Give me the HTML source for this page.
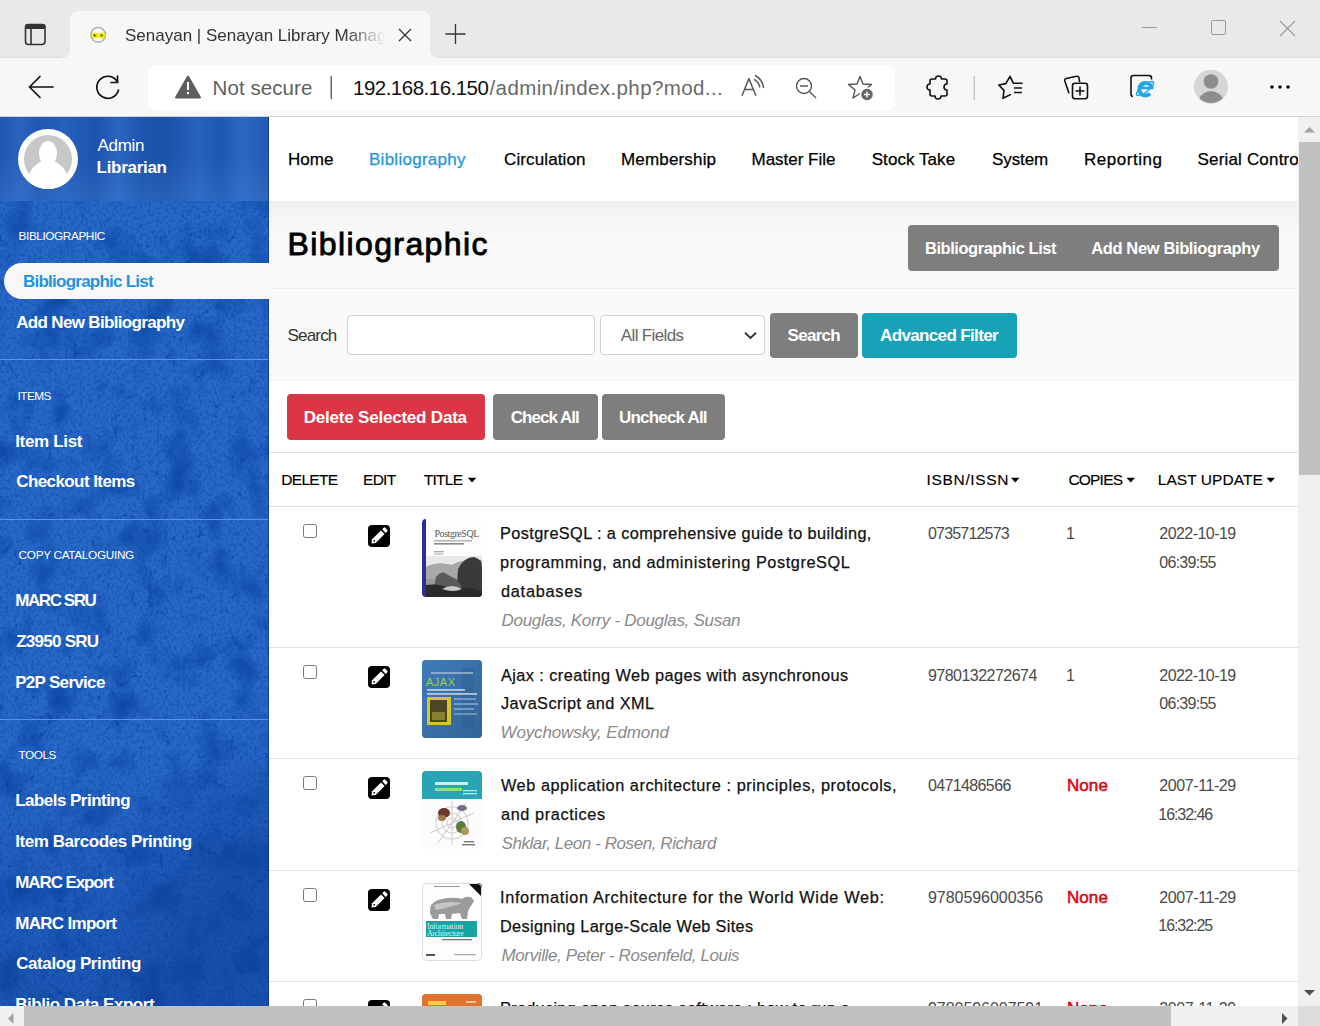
<!DOCTYPE html><html><head><meta charset="utf-8"><style>
*{box-sizing:border-box;margin:0;padding:0}
html,body{width:1320px;height:1026px;overflow:hidden;background:#fff;font-family:"Liberation Sans",sans-serif}
.t{position:absolute;white-space:nowrap;line-height:1}
svg{position:absolute;overflow:visible}
.b{position:absolute}
#tabstrip{position:absolute;left:0;top:0;width:1320px;height:58px;background:#e9e9e9}
#tab{position:absolute;left:70px;top:11px;width:360px;height:47px;background:#f7f7f7;border-radius:8px 8px 0 0}
#toolbar{position:absolute;left:0;top:58px;width:1320px;height:59px;background:#f7f7f7;border-bottom:1px solid #d2d2d2}
#addr{position:absolute;left:148px;top:65px;width:747px;height:45px;background:#fff;border-radius:8px}
#page{position:absolute;left:0;top:117px;width:1298px;height:889px;overflow:hidden;background:#fff}
#sidebar{position:absolute;left:0;top:0;width:269px;height:889px;background:#1b59bb;overflow:hidden}
#vscroll{position:absolute;left:1298px;top:117px;width:22px;height:889px;background:#f0f0f0}
#hscroll{position:absolute;left:0;top:1006px;width:1298px;height:20px;background:#f0f0f0}
#corner{position:absolute;left:1298px;top:1006px;width:22px;height:20px;background:#dcdcdc}
</style></head><body>
<div id="tabstrip"></div>
<div class="b" style="left:0px;top:56px;width:1320px;height:2px;background:linear-gradient(#e6e6e6,#dcdcdc);"></div>
<div id="tab"></div>
<div class="b" style="left:62px;top:50px;width:8px;height:8px;background:#f7f7f7;"></div>
<div class="b" style="left:62px;top:50px;width:8px;height:8px;background:#e9e9e9;border-bottom-right-radius:8px"></div>
<div class="b" style="left:430px;top:50px;width:8px;height:8px;background:#f7f7f7;"></div>
<div class="b" style="left:430px;top:50px;width:8px;height:8px;background:#e9e9e9;border-bottom-left-radius:8px"></div>
<div id="toolbar"></div><div id="addr"></div>
<svg style="left:0;top:0" width="1320" height="117" viewBox="0 0 1320 117"><rect x="25.5" y="24.5" width="19.5" height="20" rx="3" fill="none" stroke="#333" stroke-width="1.6"/><rect x="25" y="24" width="20.5" height="5" rx="2" fill="#333"/><line x1="31" y1="28" x2="31" y2="44.5" stroke="#333" stroke-width="1.6"/><circle cx="98.2" cy="34.8" r="7.3" fill="#fafafa" stroke="#b4b4b4" stroke-width="1.6"/><ellipse cx="95" cy="35.5" rx="3.6" ry="3" fill="#f0ea10"/><ellipse cx="101.6" cy="35.5" rx="3.6" ry="3" fill="#f0ea10"/><circle cx="94.6" cy="35.5" r="1" fill="#222"/><circle cx="101.6" cy="35.5" r="1" fill="#222"/><path d="M399 29 L411 41 M411 29 L399 41" stroke="#333" stroke-width="1.3"/><path d="M455.5 24 V44 M445.5 34 H465.5" stroke="#333" stroke-width="1.3"/><path d="M1142 27.5 H1157" stroke="#999" stroke-width="1"/><rect x="1211.5" y="20.5" width="14" height="14" rx="1.5" fill="none" stroke="#999" stroke-width="1"/><path d="M1280 21 L1295 36 M1295 21 L1280 36" stroke="#999" stroke-width="1.1"/><path d="M53 87 H30 M40 76.5 L29.5 87 L40 97.5" fill="none" stroke="#111" stroke-width="1.7" stroke-linecap="round" stroke-linejoin="round"/><path d="M117.5 82 A11 11 0 1 0 118.5 90" fill="none" stroke="#111" stroke-width="1.7" stroke-linecap="round"/><path d="M111 82.5 H117.5 V76" fill="none" stroke="#111" stroke-width="1.7" stroke-linecap="round" stroke-linejoin="round"/><path d="M188 76.5 L200 97.5 H176 Z" fill="#5f5f5f" stroke="#5f5f5f" stroke-width="2" stroke-linejoin="round"/><rect x="187" y="82" width="2" height="8" fill="#fff"/><rect x="187" y="92" width="2" height="2.2" fill="#fff"/><rect x="330.5" y="76" width="1.5" height="23" fill="#666"/><path d="M742 95.8 L748.9 78.6 L755.9 95.8 M744.6 89.5 H753.3" fill="none" stroke="#5a5a5a" stroke-width="1.5" stroke-linejoin="round"/><path d="M754.6 79.6 Q758.8 82.5 759.7 86.9 M755.4 75.5 Q762.5 79.5 763.5 87.4" fill="none" stroke="#5a5a5a" stroke-width="1.5" stroke-linecap="round"/><circle cx="804" cy="86" r="7.5" fill="none" stroke="#555" stroke-width="1.4"/><path d="M800 86 H808 M809.5 91.5 L816 98" stroke="#555" stroke-width="1.4"/><path d="M860 76.5 L863 84 L871.5 84.5 L865 90 L867 98 L860 93.5 L853 98 L855 90 L848.5 84.5 L857 84 Z" fill="none" stroke="#555" stroke-width="1.4" stroke-linejoin="round"/><circle cx="867" cy="94.5" r="6.5" fill="#666" stroke="#fff" stroke-width="1.5"/><path d="M867 91.5 V97.5 M864 94.5 H870" stroke="#fff" stroke-width="1.4"/><path d="M932 79 H935.5 A3 3 0 0 1 941.5 79 H945 A2 2 0 0 1 947 81 V84 A3 3 0 0 0 947 90 V94 A2 2 0 0 1 945 96 H941 A3 3 0 0 1 935 96 H932 A2 2 0 0 1 930 94 V90 A3 3 0 0 1 930 84 V81 A2 2 0 0 1 932 79 Z" fill="none" stroke="#111" stroke-width="1.6" stroke-linejoin="round"/><rect x="973.5" y="76" width="1.5" height="24" fill="#c8c8c8"/><path d="M1010.4 94.6 L1003 98.3 L1004 90.4 L998.8 85 L1005.8 83.6 L1010 76.3 L1013.5 83.3 H1022" fill="none" stroke="#111" stroke-width="1.6" stroke-linejoin="round" stroke-linecap="round"/><path d="M1014 88 H1022 M1014 92.5 H1022" stroke="#111" stroke-width="1.6"/><path d="M1069 93.3 L1064.8 81 A2 2 0 0 1 1066.2 78.5 L1076.5 76.3 A2 2 0 0 1 1079 77.8 L1079.6 82" fill="none" stroke="#111" stroke-width="1.6" stroke-linejoin="round"/><rect x="1072.5" y="83.3" width="15" height="15.4" rx="2.5" fill="#f7f7f7" stroke="#111" stroke-width="1.6"/><path d="M1080 86.5 V95.5 M1075.5 91 H1084.5" stroke="#111" stroke-width="1.6"/><path d="M1133 96.5 A2.5 2.5 0 0 1 1131 94 V78 A2.5 2.5 0 0 1 1133.5 75.5 H1149 A2.5 2.5 0 0 1 1151.5 78 V79.5" fill="none" stroke="#111" stroke-width="1.6"/><path d="M1151.8 88.8 A6.3 6.3 0 1 0 1150 93.6" fill="none" stroke="#f7f7f7" stroke-width="6.5"/><path d="M1151.8 88.8 A6.3 6.3 0 1 0 1150 93.6" fill="none" stroke="#22a7e6" stroke-width="3.8"/><path d="M1139 88 H1153" stroke="#22a7e6" stroke-width="2.6"/><ellipse cx="1145" cy="88.5" rx="10.5" ry="3.4" fill="none" stroke="#22a7e6" stroke-width="1.4" transform="rotate(-38 1145 88.5)"/><circle cx="1211" cy="86.7" r="17" fill="#d6d6d6"/><circle cx="1211" cy="81.5" r="7.3" fill="#8c8c8c"/><path d="M1199.5 98.5 A12 10 0 0 1 1222.5 98.5 A17 17 0 0 1 1199.5 98.5 Z" fill="#8c8c8c"/><circle cx="1272" cy="87" r="1.8" fill="#111"/><circle cx="1280" cy="87" r="1.8" fill="#111"/><circle cx="1288" cy="87" r="1.8" fill="#111"/></svg>
<div class="t" style="left:125px;top:26.5px;font-size:17px;color:#333;width:260px;overflow:hidden;-webkit-mask-image:linear-gradient(to right,#000 85%,transparent)">Senayan | Senayan Library Management System</div>
<div class="t" style="left:212.50px;top:78.00px;font-size:20.5px;color:#5f5f5f;font-weight:normal;font-style:normal;letter-spacing:0.086px;font-family:'Liberation Sans';">Not secure</div>
<div class="t" style="left:353.00px;top:78.00px;font-size:20.5px;color:#111;font-weight:normal;font-style:normal;letter-spacing:-0.508px;font-family:'Liberation Sans';">192.168.16.150</div>
<div class="t" style="left:489.50px;top:78.00px;font-size:20.5px;color:#6a6a6a;font-weight:normal;font-style:normal;letter-spacing:0.395px;font-family:'Liberation Sans';">/admin/index.php?mod...</div>
<div id="page">
<div id="sidebar">
<svg style="left:0;top:0" width="269" height="889"><defs><filter id="tex" x="0" y="0" width="100%" height="100%" color-interpolation-filters="sRGB"><feTurbulence type="fractalNoise" baseFrequency="0.03 0.025" numOctaves="3" seed="11"/><feColorMatrix type="matrix" values="0 0 0 0 0.03  0 0 0 0 0.26  0 0 0 0 0.62  0 0 0 -2.0 1.05"/></filter><filter id="grain" x="0" y="0" width="100%" height="100%" color-interpolation-filters="sRGB"><feTurbulence type="fractalNoise" baseFrequency="0.35 0.3" numOctaves="2" seed="5"/><feColorMatrix type="matrix" values="0 0 0 0 0.04  0 0 0 0 0.28  0 0 0 0 0.66  0 0 0 -7 3.6"/></filter><filter id="veins" x="0" y="0" width="100%" height="100%" color-interpolation-filters="sRGB"><feTurbulence type="turbulence" baseFrequency="0.03 0.025" numOctaves="4" seed="4"/><feColorMatrix type="matrix" values="0 0 0 0 0.02  0 0 0 0 0.24  0 0 0 0 0.6  0 0 0 -10 1.1"/></filter><radialGradient id="trunk" cx="0.5" cy="0.5" r="0.5"><stop offset="0" stop-color="#0a3c96" stop-opacity=".45"/><stop offset="1" stop-color="#0a3c96" stop-opacity="0"/></radialGradient></defs><rect width="269" height="889" fill="#2767c6"/><rect width="269" height="889" filter="url(#tex)"/><rect width="269" height="889" filter="url(#grain)" opacity=".35"/><rect width="269" height="889" filter="url(#veins)" opacity=".75"/><ellipse cx="230" cy="780" rx="120" ry="200" fill="url(#trunk)" transform="rotate(25 230 780)"/><defs><linearGradient id="botdark" x1="0" y1="0" x2="0" y2="1"><stop offset="0" stop-color="#08328c" stop-opacity="0"/><stop offset="1" stop-color="#08328c" stop-opacity=".35"/></linearGradient></defs><rect x="0" y="640" width="269" height="249" fill="url(#botdark)"/></svg>
<div class="b" style="left:0px;top:0px;width:269px;height:84px;background:linear-gradient(90deg,#2058b2 0%,#2a64bf 8%,#1f57b0 14%,#2560bb 24%,#1c54ad 36%,#2a66c2 44%,#1d56ae 52%,#1a52aa 62%,#2762be 74%,#1d57b0 82%,#2b68c4 90%,#1f59b2 100%);"></div>
<div class="b" style="left:0px;top:40px;width:269px;height:44px;background:linear-gradient(rgba(80,140,220,0),rgba(80,140,220,.25));"></div>
<div class="b" style="left:18px;top:12px;width:60px;height:60px;border-radius:50%;background:#fff;overflow:hidden"><div class="b" style="left:6px;top:6px;width:48px;height:48px;border-radius:50%;background:#c8c8c8"></div><div class="b" style="left:21px;top:12px;width:18px;height:25px;border-radius:50%;background:#fff"></div><div class="b" style="left:9px;top:31px;width:42px;height:52px;border-radius:50%;background:#fff"></div></div>
<div class="t" style="left:97.60px;top:20.00px;font-size:17px;color:#fff;font-weight:normal;font-style:normal;letter-spacing:-0.333px;font-family:'Liberation Sans';">Admin</div>
<div class="t" style="left:96.60px;top:42.00px;font-size:17px;color:#fff;font-weight:bold;font-style:normal;letter-spacing:-0.294px;font-family:'Liberation Sans';">Librarian</div>
<div class="t" style="left:18.60px;top:114.00px;font-size:11.8px;color:#fff;font-weight:normal;font-style:normal;letter-spacing:-0.421px;font-family:'Liberation Sans';">BIBLIOGRAPHIC</div>
<div class="b" style="left:4px;top:146px;width:290px;height:36px;background:#f8f8f8;border-radius:18px 0 0 18px"></div>
<div class="t" style="left:23.00px;top:156.00px;font-size:17px;color:#1e95de;font-weight:bold;font-style:normal;letter-spacing:-0.759px;font-family:'Liberation Sans';">Bibliographic List</div>
<div class="t" style="left:16.20px;top:197.00px;font-size:17px;color:#fff;font-weight:bold;font-style:normal;letter-spacing:-0.662px;font-family:'Liberation Sans';">Add New Bibliography</div>
<div class="b" style="left:0px;top:242px;width:269px;height:1px;background:#5d92ea;"></div>
<div class="t" style="left:17.60px;top:274.00px;font-size:11.8px;color:#fff;font-weight:normal;font-style:normal;letter-spacing:-0.545px;font-family:'Liberation Sans';">ITEMS</div>
<div class="t" style="left:15.20px;top:316.00px;font-size:17px;color:#fff;font-weight:bold;font-style:normal;letter-spacing:-0.330px;font-family:'Liberation Sans';">Item List</div>
<div class="t" style="left:16.20px;top:356.00px;font-size:17px;color:#fff;font-weight:bold;font-style:normal;letter-spacing:-0.579px;font-family:'Liberation Sans';">Checkout Items</div>
<div class="b" style="left:0px;top:402px;width:269px;height:1px;background:#5d92ea;"></div>
<div class="t" style="left:18.60px;top:433.00px;font-size:11.8px;color:#fff;font-weight:normal;font-style:normal;letter-spacing:-0.330px;font-family:'Liberation Sans';">COPY CATALOGUING</div>
<div class="t" style="left:15.20px;top:475.00px;font-size:17px;color:#fff;font-weight:bold;font-style:normal;letter-spacing:-1.419px;font-family:'Liberation Sans';">MARC SRU</div>
<div class="t" style="left:16.20px;top:516.00px;font-size:17px;color:#fff;font-weight:bold;font-style:normal;letter-spacing:-0.743px;font-family:'Liberation Sans';">Z3950 SRU</div>
<div class="t" style="left:15.20px;top:557.00px;font-size:17px;color:#fff;font-weight:bold;font-style:normal;letter-spacing:-0.690px;font-family:'Liberation Sans';">P2P Service</div>
<div class="b" style="left:0px;top:602px;width:269px;height:1px;background:#5d92ea;"></div>
<div class="t" style="left:18.60px;top:633.00px;font-size:11.8px;color:#fff;font-weight:normal;font-style:normal;letter-spacing:-0.476px;font-family:'Liberation Sans';">TOOLS</div>
<div class="t" style="left:15.20px;top:675.00px;font-size:17px;color:#fff;font-weight:bold;font-style:normal;letter-spacing:-0.529px;font-family:'Liberation Sans';">Labels Printing</div>
<div class="t" style="left:15.20px;top:716.00px;font-size:17px;color:#fff;font-weight:bold;font-style:normal;letter-spacing:-0.434px;font-family:'Liberation Sans';">Item Barcodes Printing</div>
<div class="t" style="left:15.20px;top:757.00px;font-size:17px;color:#fff;font-weight:bold;font-style:normal;letter-spacing:-1.089px;font-family:'Liberation Sans';">MARC Export</div>
<div class="t" style="left:15.20px;top:798.00px;font-size:17px;color:#fff;font-weight:bold;font-style:normal;letter-spacing:-0.694px;font-family:'Liberation Sans';">MARC Import</div>
<div class="t" style="left:16.20px;top:838.00px;font-size:17px;color:#fff;font-weight:bold;font-style:normal;letter-spacing:-0.413px;font-family:'Liberation Sans';">Catalog Printing</div>
<div class="t" style="left:15.20px;top:879.00px;font-size:17px;color:#fff;font-weight:bold;font-style:normal;letter-spacing:-0.470px;font-family:'Liberation Sans';">Biblio Data Export</div>
<div class="b" style="left:268px;top:0px;width:1px;height:146px;background:rgba(10,40,100,.5);"></div>
<div class="b" style="left:268px;top:182px;width:1px;height:707px;background:rgba(10,40,100,.5);"></div>
</div>
<div class="b" style="left:269px;top:0px;width:1029px;height:84px;background:#fff;"></div>
<div class="t" style="left:288.00px;top:34.00px;font-size:17px;color:#000;font-weight:normal;font-style:normal;letter-spacing:0.036px;font-family:'Liberation Sans';-webkit-text-stroke:0.25px currentColor;">Home</div>
<div class="t" style="left:369.00px;top:34.00px;font-size:17px;color:#1e95de;font-weight:normal;font-style:normal;letter-spacing:0.267px;font-family:'Liberation Sans';-webkit-text-stroke:0.25px currentColor;">Bibliography</div>
<div class="t" style="left:504.00px;top:34.00px;font-size:17px;color:#000;font-weight:normal;font-style:normal;letter-spacing:0.114px;font-family:'Liberation Sans';-webkit-text-stroke:0.25px currentColor;">Circulation</div>
<div class="t" style="left:621.00px;top:34.00px;font-size:17px;color:#000;font-weight:normal;font-style:normal;letter-spacing:0.169px;font-family:'Liberation Sans';-webkit-text-stroke:0.25px currentColor;">Membership</div>
<div class="t" style="left:751.50px;top:34.00px;font-size:17px;color:#000;font-weight:normal;font-style:normal;letter-spacing:-0.012px;font-family:'Liberation Sans';-webkit-text-stroke:0.25px currentColor;">Master File</div>
<div class="t" style="left:871.70px;top:34.00px;font-size:17px;color:#000;font-weight:normal;font-style:normal;letter-spacing:0.067px;font-family:'Liberation Sans';-webkit-text-stroke:0.25px currentColor;">Stock Take</div>
<div class="t" style="left:992.00px;top:34.00px;font-size:17px;color:#000;font-weight:normal;font-style:normal;letter-spacing:-0.103px;font-family:'Liberation Sans';-webkit-text-stroke:0.25px currentColor;">System</div>
<div class="t" style="left:1084.00px;top:34.00px;font-size:17px;color:#000;font-weight:normal;font-style:normal;letter-spacing:0.530px;font-family:'Liberation Sans';-webkit-text-stroke:0.25px currentColor;">Reporting</div>
<div class="t" style="left:1197.50px;top:34.00px;font-size:17px;color:#000;font-weight:normal;font-style:normal;letter-spacing:0.176px;font-family:'Liberation Sans';-webkit-text-stroke:0.25px currentColor;">Serial Control</div>
<div class="b" style="left:269px;top:84px;width:1029px;height:88px;background:linear-gradient(#efefef,#f3f3f3 8%,#f8f8f8 35%,#f9f9f9);"></div>
<div class="t" style="left:287.50px;top:111.00px;font-size:32px;color:#000;font-weight:normal;font-style:normal;letter-spacing:1.398px;font-family:'Liberation Sans';-webkit-text-stroke:0.9px #000;">Bibliographic</div>
<div class="b" style="left:908px;top:108px;width:371px;height:46px;background:#7e7e7e;border-radius:4px"></div>
<div class="t" style="left:925.00px;top:123.00px;font-size:16.5px;color:#fff;font-weight:bold;font-style:normal;letter-spacing:-0.461px;font-family:'Liberation Sans';">Bibliographic List</div>
<div class="t" style="left:1091.20px;top:123.00px;font-size:16.5px;color:#fff;font-weight:bold;font-style:normal;letter-spacing:-0.370px;font-family:'Liberation Sans';">Add New Bibliography</div>
<div class="b" style="left:269px;top:171px;width:1029px;height:1px;background:#efefef;"></div>
<div class="b" style="left:269px;top:172px;width:1029px;height:92px;background:#fafafa;"></div>
<div class="b" style="left:269px;top:263px;width:1029px;height:1px;background:#f3f3f3;"></div>
<div class="t" style="left:287.60px;top:210.00px;font-size:17px;color:#333;font-weight:normal;font-style:normal;letter-spacing:-0.842px;font-family:'Liberation Sans';">Search</div>
<div class="b" style="left:347px;top:198px;width:248px;height:40px;background:#fff;border:1px solid #d2d2d2;border-radius:4px"></div>
<div class="b" style="left:600px;top:198px;width:165px;height:40px;background:#fff;border:1px solid #d2d2d2;border-radius:4px"></div>
<div class="t" style="left:620.80px;top:210.00px;font-size:17px;color:#666;font-weight:normal;font-style:normal;letter-spacing:-0.640px;font-family:'Liberation Sans';">All Fields</div>
<svg style="left:0;top:0" width="1" height="1"><path d="M745 215.8 L750.5 221.0 L756 215.8" fill="none" stroke="#333" stroke-width="1.9"/></svg>
<div class="b" style="left:770px;top:196px;width:88px;height:45px;background:#7e7e7e;border-radius:4px"></div>
<div class="t" style="left:787.50px;top:210.00px;font-size:17px;color:#fff;font-weight:bold;font-style:normal;letter-spacing:-0.704px;font-family:'Liberation Sans';">Search</div>
<div class="b" style="left:862px;top:196px;width:155px;height:45px;background:#17a2b8;border-radius:4px"></div>
<div class="t" style="left:880.00px;top:210.00px;font-size:17px;color:#fff;font-weight:bold;font-style:normal;letter-spacing:-0.637px;font-family:'Liberation Sans';">Advanced Filter</div>
<div class="b" style="left:287px;top:277px;width:198px;height:46px;background:#dc3545;border-radius:4px"></div>
<div class="t" style="left:303.70px;top:292.00px;font-size:17px;color:#fff;font-weight:bold;font-style:normal;letter-spacing:-0.205px;font-family:'Liberation Sans';">Delete Selected Data</div>
<div class="b" style="left:493px;top:277px;width:105px;height:46px;background:#7e7e7e;border-radius:4px"></div>
<div class="t" style="left:510.70px;top:292.00px;font-size:17px;color:#fff;font-weight:bold;font-style:normal;letter-spacing:-0.969px;font-family:'Liberation Sans';">Check All</div>
<div class="b" style="left:602px;top:277px;width:123px;height:46px;background:#7e7e7e;border-radius:4px"></div>
<div class="t" style="left:619.00px;top:292.00px;font-size:17px;color:#fff;font-weight:bold;font-style:normal;letter-spacing:-0.809px;font-family:'Liberation Sans';">Uncheck All</div>
<div class="b" style="left:269px;top:335px;width:1029px;height:1px;background:#dedede;"></div>
<div class="t" style="left:281.20px;top:355.00px;font-size:15.5px;color:#000;font-weight:normal;font-style:normal;letter-spacing:-0.672px;font-family:'Liberation Sans';-webkit-text-stroke:0.15px #000;">DELETE</div>
<div class="t" style="left:363.00px;top:355.00px;font-size:15.5px;color:#000;font-weight:normal;font-style:normal;letter-spacing:-0.713px;font-family:'Liberation Sans';-webkit-text-stroke:0.15px #000;">EDIT</div>
<div class="t" style="left:423.70px;top:355.00px;font-size:15.5px;color:#000;font-weight:normal;font-style:normal;letter-spacing:-0.716px;font-family:'Liberation Sans';-webkit-text-stroke:0.15px #000;">TITLE</div>
<svg style="left:0;top:0" width="1" height="1"><path d="M467.8 360.8 h8.5 l-4.25 4.6 z" fill="#000"/></svg>
<div class="t" style="left:926.60px;top:355.00px;font-size:15.5px;color:#000;font-weight:normal;font-style:normal;letter-spacing:0.654px;font-family:'Liberation Sans';-webkit-text-stroke:0.15px #000;">ISBN/ISSN</div>
<svg style="left:0;top:0" width="1" height="1"><path d="M1011.0 360.8 h8.5 l-4.25 4.6 z" fill="#000"/></svg>
<div class="t" style="left:1068.40px;top:355.00px;font-size:15.5px;color:#000;font-weight:normal;font-style:normal;letter-spacing:-0.787px;font-family:'Liberation Sans';-webkit-text-stroke:0.15px #000;">COPIES</div>
<svg style="left:0;top:0" width="1" height="1"><path d="M1126.5 360.8 h8.5 l-4.25 4.6 z" fill="#000"/></svg>
<div class="t" style="left:1157.80px;top:355.00px;font-size:15.5px;color:#000;font-weight:normal;font-style:normal;letter-spacing:0.055px;font-family:'Liberation Sans';-webkit-text-stroke:0.15px #000;">LAST UPDATE</div>
<svg style="left:0;top:0" width="1" height="1"><path d="M1266.5 360.8 h8.5 l-4.25 4.6 z" fill="#000"/></svg>
<div class="b" style="left:269px;top:389px;width:1029px;height:1px;background:#dedede;"></div>
<div class="b" style="left:303px;top:407px;width:14px;height:14px;background:#fff;border:1px solid #7a7a7a;border-radius:2.5px"></div>
<div class="b" style="left:368px;top:408px;width:22px;height:22px;background:#000;border-radius:4px"></div>
<svg style="left:0;top:0" width="1" height="1"><g transform="translate(368 408)"><path d="M3.4 18.6 L4.1 14.3 L13 5.4 L16.6 9 L7.7 17.9 Z" fill="#fff"/><circle cx="6.2" cy="15.8" r="0.9" fill="#000"/><path d="M14.1 4.3 L15.6 2.8 A1.2 1.2 0 0 1 17.3 2.8 L19.2 4.7 A1.2 1.2 0 0 1 19.2 6.4 L17.7 7.9 Z" fill="#fff"/></g></svg>
<svg style="left:422px;top:402px" width="60" height="78" viewBox="0 0 60 78"><defs><clipPath id="c0"><rect width="60" height="78" rx="4"/></clipPath></defs><g clip-path="url(#c0)"><rect width="60" height="78" fill="#fdfdfd"/><rect width="4" height="78" fill="#2b2d96"/><text x="12.5" y="17.5" font-family="Liberation Serif" font-size="10" fill="#5a5a5a" letter-spacing="-0.45">PostgreSQL</text><rect x="12" y="21" width="38" height="1.6" fill="#b8b8b8"/><rect x="12" y="24" width="30" height="1.6" fill="#888"/><rect x="12" y="32" width="10" height="1.4" fill="#aaa"/><rect x="12" y="34.5" width="9" height="1.2" fill="#bbb"/><rect x="4" y="37" width="56" height="41" fill="#9a9a9a"/><path d="M4 37 H60 V41 Q40 40 30 46 Q15 42 4 48 Z" fill="#e8e8e8"/><path d="M4 48 Q15 42 30 46 Q40 40 60 41 V60 H4 Z" fill="#a8a8a8"/><path d="M34 78 L36 50 Q42 38 52 38 Q60 40 60 48 V78 Z" fill="#3a3a3a"/><path d="M10 78 L14 58 Q20 50 26 56 L34 60 Q40 66 44 78 Z" fill="#5a5a5a"/><path d="M4 78 V66 Q18 64 30 70 Q45 66 60 72 V78 Z" fill="#2a2a2a"/><path d="M20 70 Q30 64 40 70 Q32 74 20 70 Z" fill="#c8c8c8"/></g></svg>
<div class="t" style="left:500.00px;top:408.00px;font-size:16.3px;color:#111;font-weight:normal;font-style:normal;letter-spacing:0.394px;font-family:'Liberation Sans';-webkit-text-stroke:0.25px currentColor;">PostgreSQL : a comprehensive guide to building,</div>
<div class="t" style="left:500.00px;top:437.00px;font-size:16.3px;color:#111;font-weight:normal;font-style:normal;letter-spacing:0.577px;font-family:'Liberation Sans';-webkit-text-stroke:0.25px currentColor;">programming, and administering PostgreSQL</div>
<div class="t" style="left:501.00px;top:466.00px;font-size:16.3px;color:#111;font-weight:normal;font-style:normal;letter-spacing:0.751px;font-family:'Liberation Sans';-webkit-text-stroke:0.25px currentColor;">databases</div>
<div class="t" style="left:501.50px;top:495.00px;font-size:17px;color:#8a8a8a;font-weight:normal;font-style:italic;letter-spacing:-0.284px;font-family:'Liberation Sans';">Douglas, Korry - Douglas, Susan</div>
<div class="t" style="left:928.00px;top:409.00px;font-size:16px;color:#4a4a4a;font-weight:normal;font-style:normal;letter-spacing:-0.810px;font-family:'Liberation Sans';">0735712573</div>
<div class="t" style="left:1066.00px;top:409.00px;font-size:16px;color:#4a4a4a;font-weight:normal;font-style:normal;letter-spacing:0.000px;font-family:'Liberation Sans';">1</div>
<div class="t" style="left:1159.30px;top:409.00px;font-size:16px;color:#4a4a4a;font-weight:normal;font-style:normal;letter-spacing:-0.549px;font-family:'Liberation Sans';">2022-10-19</div>
<div class="t" style="left:1159.30px;top:438.00px;font-size:16px;color:#4a4a4a;font-weight:normal;font-style:normal;letter-spacing:-0.726px;font-family:'Liberation Sans';">06:39:55</div>
<div class="b" style="left:269px;top:530px;width:1029px;height:1px;background:#e3e3e3;"></div>
<div class="b" style="left:303px;top:548px;width:14px;height:14px;background:#fff;border:1px solid #7a7a7a;border-radius:2.5px"></div>
<div class="b" style="left:368px;top:549px;width:22px;height:22px;background:#000;border-radius:4px"></div>
<svg style="left:0;top:0" width="1" height="1"><g transform="translate(368 549)"><path d="M3.4 18.6 L4.1 14.3 L13 5.4 L16.6 9 L7.7 17.9 Z" fill="#fff"/><circle cx="6.2" cy="15.8" r="0.9" fill="#000"/><path d="M14.1 4.3 L15.6 2.8 A1.2 1.2 0 0 1 17.3 2.8 L19.2 4.7 A1.2 1.2 0 0 1 19.2 6.4 L17.7 7.9 Z" fill="#fff"/></g></svg>
<svg style="left:422px;top:543px" width="60" height="78" viewBox="0 0 60 78"><defs><clipPath id="c1"><rect width="60" height="78" rx="4"/></clipPath></defs><g clip-path="url(#c1)"><rect width="60" height="78" fill="#3b72ad"/><rect x="0" y="0" width="60" height="78" fill="url(#ajg)"/><defs><linearGradient id="ajg" x1="0" y1="0" x2="1" y2="1"><stop offset="0" stop-color="#4282c0" stop-opacity=".6"/><stop offset="1" stop-color="#2e5a88" stop-opacity=".6"/></linearGradient></defs><rect x="40" y="8" width="12" height="60" fill="#2f5f92" opacity=".5"/><rect x="9" y="12" width="42" height="2" fill="#9cb6d2" opacity=".8"/><text x="4" y="26" font-family="Liberation Sans" font-size="11" fill="#a2cf4e" letter-spacing="0.5">AJAX</text><rect x="5" y="29" width="38" height="1.8" fill="#dfe8f0" opacity=".75"/><rect x="5" y="33" width="50" height="1.8" fill="#dfe8f0" opacity=".75"/><rect x="5" y="37" width="24" height="28" fill="#d8c52e"/><rect x="8" y="40" width="17" height="22" fill="#4a4626"/><rect x="10" y="52" width="13" height="8" fill="#8a8030"/><rect x="32" y="38" width="22" height="2" fill="#8fb0d0" opacity=".7"/><rect x="32" y="43" width="24" height="2" fill="#8fb0d0" opacity=".7"/><rect x="32" y="48" width="20" height="2" fill="#8fb0d0" opacity=".7"/><rect x="32" y="53" width="23" height="2" fill="#8fb0d0" opacity=".6"/></g></svg>
<div class="t" style="left:501.00px;top:550.00px;font-size:16.3px;color:#111;font-weight:normal;font-style:normal;letter-spacing:0.429px;font-family:'Liberation Sans';-webkit-text-stroke:0.25px currentColor;">Ajax : creating Web pages with asynchronous</div>
<div class="t" style="left:501.00px;top:578.00px;font-size:16.3px;color:#111;font-weight:normal;font-style:normal;letter-spacing:0.433px;font-family:'Liberation Sans';-webkit-text-stroke:0.25px currentColor;">JavaScript and XML</div>
<div class="t" style="left:500.50px;top:607.00px;font-size:17px;color:#8a8a8a;font-weight:normal;font-style:italic;letter-spacing:-0.131px;font-family:'Liberation Sans';">Woychowsky, Edmond</div>
<div class="t" style="left:928.00px;top:551.00px;font-size:16px;color:#4a4a4a;font-weight:normal;font-style:normal;letter-spacing:-0.532px;font-family:'Liberation Sans';">9780132272674</div>
<div class="t" style="left:1066.00px;top:551.00px;font-size:16px;color:#4a4a4a;font-weight:normal;font-style:normal;letter-spacing:0.000px;font-family:'Liberation Sans';">1</div>
<div class="t" style="left:1159.30px;top:551.00px;font-size:16px;color:#4a4a4a;font-weight:normal;font-style:normal;letter-spacing:-0.549px;font-family:'Liberation Sans';">2022-10-19</div>
<div class="t" style="left:1159.30px;top:579.00px;font-size:16px;color:#4a4a4a;font-weight:normal;font-style:normal;letter-spacing:-0.726px;font-family:'Liberation Sans';">06:39:55</div>
<div class="b" style="left:269px;top:641px;width:1029px;height:1px;background:#e3e3e3;"></div>
<div class="b" style="left:303px;top:659px;width:14px;height:14px;background:#fff;border:1px solid #7a7a7a;border-radius:2.5px"></div>
<div class="b" style="left:368px;top:660px;width:22px;height:22px;background:#000;border-radius:4px"></div>
<svg style="left:0;top:0" width="1" height="1"><g transform="translate(368 660)"><path d="M3.4 18.6 L4.1 14.3 L13 5.4 L16.6 9 L7.7 17.9 Z" fill="#fff"/><circle cx="6.2" cy="15.8" r="0.9" fill="#000"/><path d="M14.1 4.3 L15.6 2.8 A1.2 1.2 0 0 1 17.3 2.8 L19.2 4.7 A1.2 1.2 0 0 1 19.2 6.4 L17.7 7.9 Z" fill="#fff"/></g></svg>
<svg style="left:422px;top:654px" width="60" height="78" viewBox="0 0 60 78"><defs><clipPath id="c2"><rect width="60" height="78" rx="4"/></clipPath></defs><g clip-path="url(#c2)"><rect width="60" height="78" fill="#fcfcfc"/><rect width="60" height="28" fill="#29a4b4"/><rect x="13" y="11" width="33" height="3" fill="#cdeef2"/><rect x="13" y="17" width="27" height="3" fill="#8fe07c"/><rect x="41" y="19" width="14" height="1.3" fill="#bfe6ea"/><rect x="41" y="22" width="14" height="1.3" fill="#bfe6ea"/><g fill="none" stroke="#d0d0d0" stroke-width="1.1"><circle cx="30" cy="52" r="16"/><circle cx="30" cy="52" r="10"/><circle cx="30" cy="52" r="5"/><path d="M8 62 L52 42 M16 72 L44 32 M30 30 V74"/></g><ellipse cx="22" cy="42" rx="6" ry="5" fill="#6e3a2e"/><ellipse cx="20" cy="47" rx="4" ry="3" fill="#a07a50"/><ellipse cx="40" cy="37" rx="5" ry="3" fill="#7a6a90"/><ellipse cx="39" cy="56" rx="5" ry="6" fill="#5a7a3a"/><ellipse cx="43" cy="60" rx="4" ry="4" fill="#a89a60"/><rect x="42" y="70" width="10" height="1.4" fill="#777"/><rect x="40" y="73" width="13" height="1.4" fill="#777"/></g></svg>
<div class="t" style="left:501.00px;top:660.00px;font-size:16.3px;color:#111;font-weight:normal;font-style:normal;letter-spacing:0.546px;font-family:'Liberation Sans';-webkit-text-stroke:0.25px currentColor;">Web application architecture : principles, protocols,</div>
<div class="t" style="left:501.00px;top:689.00px;font-size:16.3px;color:#111;font-weight:normal;font-style:normal;letter-spacing:0.609px;font-family:'Liberation Sans';-webkit-text-stroke:0.25px currentColor;">and practices</div>
<div class="t" style="left:501.50px;top:718.00px;font-size:17px;color:#8a8a8a;font-weight:normal;font-style:italic;letter-spacing:-0.426px;font-family:'Liberation Sans';">Shklar, Leon - Rosen, Richard</div>
<div class="t" style="left:928.00px;top:661.00px;font-size:16px;color:#4a4a4a;font-weight:normal;font-style:normal;letter-spacing:-0.632px;font-family:'Liberation Sans';">0471486566</div>
<div class="t" style="left:1067.00px;top:660.00px;font-size:17px;color:#e3000f;font-weight:normal;font-style:normal;letter-spacing:0.071px;font-family:'Liberation Sans';-webkit-text-stroke:0.5px #e3000f;">None</div>
<div class="t" style="left:1159.30px;top:661.00px;font-size:16px;color:#4a4a4a;font-weight:normal;font-style:normal;letter-spacing:-0.418px;font-family:'Liberation Sans';">2007-11-29</div>
<div class="t" style="left:1158.30px;top:690.00px;font-size:16px;color:#4a4a4a;font-weight:normal;font-style:normal;letter-spacing:-1.055px;font-family:'Liberation Sans';">16:32:46</div>
<div class="b" style="left:269px;top:753px;width:1029px;height:1px;background:#e3e3e3;"></div>
<div class="b" style="left:303px;top:771px;width:14px;height:14px;background:#fff;border:1px solid #7a7a7a;border-radius:2.5px"></div>
<div class="b" style="left:368px;top:772px;width:22px;height:22px;background:#000;border-radius:4px"></div>
<svg style="left:0;top:0" width="1" height="1"><g transform="translate(368 772)"><path d="M3.4 18.6 L4.1 14.3 L13 5.4 L16.6 9 L7.7 17.9 Z" fill="#fff"/><circle cx="6.2" cy="15.8" r="0.9" fill="#000"/><path d="M14.1 4.3 L15.6 2.8 A1.2 1.2 0 0 1 17.3 2.8 L19.2 4.7 A1.2 1.2 0 0 1 19.2 6.4 L17.7 7.9 Z" fill="#fff"/></g></svg>
<svg style="left:422px;top:766px" width="60" height="78" viewBox="0 0 60 78"><defs><clipPath id="c3"><rect width="60" height="78" rx="4"/></clipPath></defs><g clip-path="url(#c3)"><rect width="60" height="78" fill="#fdfdfd"/><rect x="4" y="0" width="50" height="1" fill="#1a8a8a"/><rect x="12" y="3" width="26" height="1" fill="#999"/><path d="M46 0 H60 V14 Z" fill="#111"/><path d="M8 30 Q7 20 16 17 Q30 13 40 16 Q45 12 50 15 L52 18 Q48 24 46 28 L45 36 H40 L38 30 L30 31 L29 36 H24 L23 31 H17 L16 36 H11 Z" fill="#9a9a9a"/><path d="M12 22 Q25 17 40 20 Q30 24 14 27 Z" fill="#c4c4c4"/><rect x="4" y="38" width="51" height="16" fill="#19a3a3"/><text x="5" y="46" font-family="Liberation Serif" font-size="8" fill="#d8f2f2" letter-spacing="-0.2">Information</text><text x="5" y="53" font-family="Liberation Serif" font-size="8" fill="#d8f2f2" letter-spacing="-0.3">Architecture</text><rect x="20" y="56" width="30" height="1.3" fill="#777"/><rect x="4" y="71" width="9" height="2" fill="#555"/><rect x="32" y="71" width="22" height="1.2" fill="#aaa"/><rect x="0.5" y="0.5" width="59" height="77" rx="4" fill="none" stroke="#ddd"/></g></svg>
<div class="t" style="left:500.00px;top:772.00px;font-size:16.3px;color:#111;font-weight:normal;font-style:normal;letter-spacing:0.653px;font-family:'Liberation Sans';-webkit-text-stroke:0.25px currentColor;">Information Architecture for the World Wide Web:</div>
<div class="t" style="left:500.00px;top:801.00px;font-size:16.3px;color:#111;font-weight:normal;font-style:normal;letter-spacing:0.333px;font-family:'Liberation Sans';-webkit-text-stroke:0.25px currentColor;">Designing Large-Scale Web Sites</div>
<div class="t" style="left:501.50px;top:830.00px;font-size:17px;color:#8a8a8a;font-weight:normal;font-style:italic;letter-spacing:-0.372px;font-family:'Liberation Sans';">Morville, Peter - Rosenfeld, Louis</div>
<div class="t" style="left:928.00px;top:773.00px;font-size:16px;color:#4a4a4a;font-weight:normal;font-style:normal;letter-spacing:-0.048px;font-family:'Liberation Sans';">9780596000356</div>
<div class="t" style="left:1067.00px;top:772.00px;font-size:17px;color:#e3000f;font-weight:normal;font-style:normal;letter-spacing:0.071px;font-family:'Liberation Sans';-webkit-text-stroke:0.5px #e3000f;">None</div>
<div class="t" style="left:1159.30px;top:773.00px;font-size:16px;color:#4a4a4a;font-weight:normal;font-style:normal;letter-spacing:-0.418px;font-family:'Liberation Sans';">2007-11-29</div>
<div class="t" style="left:1158.30px;top:801.00px;font-size:16px;color:#4a4a4a;font-weight:normal;font-style:normal;letter-spacing:-1.055px;font-family:'Liberation Sans';">16:32:25</div>
<div class="b" style="left:269px;top:864px;width:1029px;height:1px;background:#e3e3e3;"></div>
<div class="b" style="left:303px;top:882px;width:14px;height:14px;background:#fff;border:1px solid #7a7a7a;border-radius:2.5px"></div>
<div class="b" style="left:368px;top:883px;width:22px;height:22px;background:#000;border-radius:4px"></div>
<svg style="left:0;top:0" width="1" height="1"><g transform="translate(368 883)"><path d="M3.4 18.6 L4.1 14.3 L13 5.4 L16.6 9 L7.7 17.9 Z" fill="#fff"/><circle cx="6.2" cy="15.8" r="0.9" fill="#000"/><path d="M14.1 4.3 L15.6 2.8 A1.2 1.2 0 0 1 17.3 2.8 L19.2 4.7 A1.2 1.2 0 0 1 19.2 6.4 L17.7 7.9 Z" fill="#fff"/></g></svg>
<svg style="left:422px;top:877px" width="60" height="78" viewBox="0 0 60 78"><defs><clipPath id="c4"><rect width="60" height="78" rx="4"/></clipPath></defs><g clip-path="url(#c4)"><rect width="60" height="78" fill="#e57c33"/><rect x="0" y="0" width="60" height="78" fill="#d96a28" opacity=".4"/><rect x="6" y="7" width="18" height="4" fill="#f3d24a"/><rect x="44" y="7" width="10" height="2" fill="#f7c090"/></g></svg>
<div class="t" style="left:500.00px;top:883.00px;font-size:16.3px;color:#111;font-weight:normal;font-style:normal;letter-spacing:0.000px;font-family:'Liberation Sans';-webkit-text-stroke:0.25px currentColor;letter-spacing:0.3px">Producing open source software : how to run a</div>
<div class="t" style="left:501.00px;top:912.00px;font-size:16.3px;color:#111;font-weight:normal;font-style:normal;letter-spacing:0.000px;font-family:'Liberation Sans';-webkit-text-stroke:0.25px currentColor;letter-spacing:0.3px">successful free software project</div>
<div class="t" style="left:501.50px;top:941.00px;font-size:17px;color:#8a8a8a;font-weight:normal;font-style:italic;letter-spacing:0.000px;font-family:'Liberation Sans';">Fogel, Karl</div>
<div class="t" style="left:928.00px;top:884.00px;font-size:16px;color:#4a4a4a;font-weight:normal;font-style:normal;letter-spacing:-0.048px;font-family:'Liberation Sans';">9780596007591</div>
<div class="t" style="left:1067.00px;top:883.00px;font-size:17px;color:#e3000f;font-weight:normal;font-style:normal;letter-spacing:0.071px;font-family:'Liberation Sans';-webkit-text-stroke:0.5px #e3000f;">None</div>
<div class="t" style="left:1159.30px;top:884.00px;font-size:16px;color:#4a4a4a;font-weight:normal;font-style:normal;letter-spacing:-0.418px;font-family:'Liberation Sans';">2007-11-29</div>
<div class="t" style="left:1158.30px;top:913.00px;font-size:16px;color:#4a4a4a;font-weight:normal;font-style:normal;letter-spacing:-1.055px;font-family:'Liberation Sans';">16:32:05</div>
</div>
<div id="vscroll"></div><div id="hscroll"></div><div id="corner"></div>
<div class="b" style="left:1299px;top:142px;width:21px;height:333px;background:#c1c1c1;"></div>
<div class="b" style="left:24px;top:1006px;width:1147px;height:20px;background:#c1c1c1;"></div>
<svg style="left:0;top:0" width="1" height="1"><path d="M1304 132.5 L1309.5 127 L1315 132.5 Z" fill="#a3a3a3"/><path d="M1304 990 L1309.5 995.5 L1315 990 Z" fill="#505050"/><path d="M13.5 1013 L8 1018.5 L13.5 1024 Z" fill="#a3a3a3"/><path d="M1282 1013 L1287.5 1018.5 L1282 1024 Z" fill="#505050"/></svg>
</body></html>
